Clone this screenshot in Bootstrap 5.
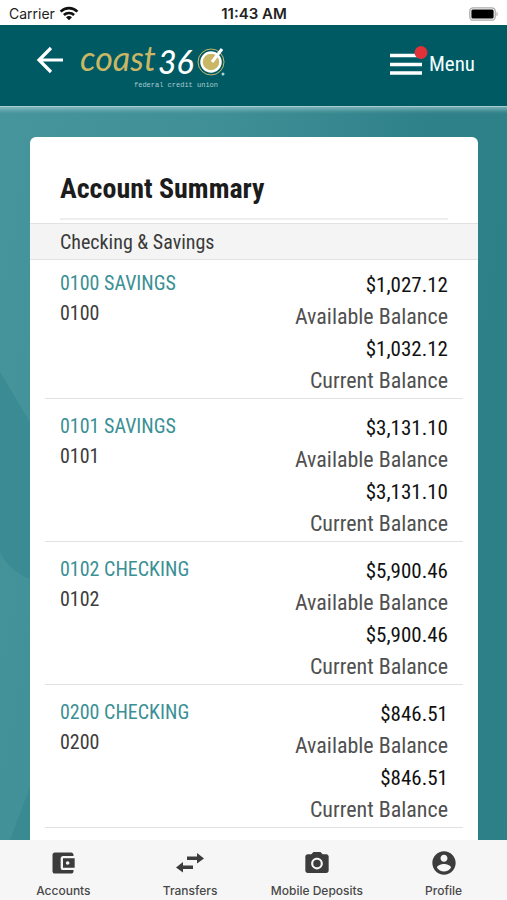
<!DOCTYPE html>
<html lang="en">
<head>
<meta charset="utf-8">
<meta name="viewport" content="width=device-width, initial-scale=1">
<title>Account Summary</title>
<link href="https://cdn.jsdelivr.net/npm/bootstrap@5.3.0/dist/css/bootstrap.min.css" rel="stylesheet">
<style>
  body { font-family: "Roboto Condensed", "Liberation Sans Narrow", Roboto, sans-serif; color: #3c3c3c; background: #fff; }
  .status-bar { height: 25px; padding: 2px 8px 0 9px; font: 14px/24px Inter, sans-serif; color: #222; }
  .status-bar .clock { font-size: 15px; font-weight: 600; }
  .status-side { flex: 1 1 0; }
  .app-header { height: 81px; padding: 0 32px 4px 36px; background: #005a64; color: #fff; }
  .menu-btn { font-size: 21px; line-height: 28px; color: #f2ffff; }
  .page-main { background: linear-gradient(100deg, #47959c 0%, #3f8f97 35%, #2f8189 68%, #2e8088 100%); padding: 30px 29px 0 30px; border-top: 1px solid #a9cdd1; box-shadow: inset 0 7px 4px -4px rgba(190, 225, 228, .5); }
  .backdrop { inset: 0; }
  .summary-card { border-radius: 6px 6px 0 0; }
  .summary-title { margin: 0 30px; padding: 34px 0 11px; font-size: 28px; line-height: 36px; font-weight: 700; color: #1c1c1c; border-bottom: 2px solid #eee; }
  .group-title { margin: 3px 0 0; padding: 0 30px; height: 37px; font-size: 20px; font-weight: 400; line-height: 36px; background: #f4f4f4; border-top: 1px solid #e2e2e2; border-bottom: 1px solid #e2e2e2; color: #3a3a3a; }
  .account-row { margin: 0 15px; padding: 13px 15px 1px; border-bottom: 1px solid #e2e2e2; font-size: 22px; line-height: 32px; }
  .account-row:first-child { padding-top: 9px; }
  .account-name { font-size: 20px; line-height: 28px; color: #3a9095; }
  .account-no { font-size: 20px; line-height: 32px; }
  .amount { color: #111; font-size: 21px; }
  .amount-label { color: #505050; }
  .tab-bar { height: 60px; background: #f6f6f6; }
  .tab-link { padding-top: 9px; font: 500 12px/16px Inter, sans-serif; color: #484848; gap: 6px; }
</style>
</head>
<body class="d-flex flex-column vh-100 overflow-hidden">
  <div class="status-bar d-flex align-items-center flex-shrink-0">
    <div class="status-side d-flex align-items-center gap-1">
      <span>Carrier</span>
      <svg width="20" height="15" viewBox="0 0 20 15" fill="none" stroke="#111" stroke-width="2.6" aria-hidden="true"><path d="M1.6 5.600C6.400.9 13.600.9 18.400 5.600M4.900 9C7.700 6.300 12.300 6.300 15.100 9"/><path d="M7 11.200Q10 8.700 13 11.200L10 14.200Z" fill="#111" stroke="none"/></svg>
    </div>
    <span class="clock">11:43 AM</span>
    <div class="status-side d-flex justify-content-end">
      <svg width="30" height="14" viewBox="0 0 30 14" aria-hidden="true"><rect x=".8" y=".8" width="25.400" height="12.400" rx="3.500" fill="#fff" stroke="#aaa" stroke-width="1.300"/><rect x="2.400" y="2.400" width="22.200" height="9.200" rx="1.500"/><path d="M27.500 4.500Q30 7 27.500 9.500Z" fill="#aaa"/></svg>
    </div>
  </div>

  <header class="app-header d-flex align-items-center flex-shrink-0">
    <button type="button" class="btn p-0 border-0 d-flex mb-2" aria-label="Back">
      <svg width="28" height="28" viewBox="0 0 28 28" fill="none" stroke="#fff" stroke-width="3.200"><path d="M15 2 3 14 15 26M3 14H27"/></svg>
    </button>
    <a href="#" class="d-flex ms-3" aria-label="Coast360 federal credit union">
      <svg width="150" height="56" viewBox="0 -4 150 56">
        <g font-family="Lato, sans-serif" font-style="italic">
          <text x="0" y="31" font-size="34" fill="#c9b765">coast</text>
          <text x="78" y="34" font-size="32" font-weight="500" fill="#fff">36</text>
        </g>
        <circle cx="131" cy="22" r="13" fill="none" stroke="#c9b765" stroke-width="1"/>
        <circle cx="131" cy="22" r="9.500" fill="#c9b765" stroke="#fff" stroke-width="2.500"/>
        <path d="M132 22 142 9" stroke="#fff" stroke-width="3"/>
        <circle cx="143" cy="34" r="1.500" fill="#b9d0d0"/>
        <text x="54" y="47" font-family="Liberation Mono, monospace" font-size="7" fill="#a9cdd1">federal credit union</text>
      </svg>
    </a>
    <button type="button" class="menu-btn btn p-0 border-0 ms-auto d-flex align-items-center">
      <svg width="40" height="36" viewBox="0 0 40 36" aria-hidden="true"><path d="M1 9.500H33M1 18.500H33M1 27H33" stroke="#fff" stroke-width="3.500"/><circle cx="32" cy="6.500" r="6.500" fill="#e03238"/></svg>
      Menu
    </button>
  </header>

  <main class="page-main position-relative d-flex flex-column flex-grow-1 overflow-hidden">
    <svg class="backdrop position-absolute w-100 h-100" viewBox="0 0 507 733" preserveAspectRatio="none" aria-hidden="true"><path d="M0 265 34 322V474Q8 464 0 445Z" fill="#3a8b93"/><path d="M30 680 10 733H34Z" fill="#398a91"/></svg>
    <section class="summary-card bg-white position-relative flex-grow-1">
      <h1 class="summary-title">Account Summary</h1>
      <h2 class="group-title">Checking &amp; Savings</h2>
      <ul class="list-unstyled mb-0">
        <li class="account-row d-flex justify-content-between">
          <div><a href="#" class="account-name d-block text-decoration-none">0100 SAVINGS</a><div class="account-no">0100</div></div>
          <div class="text-end"><div class="amount">$1,027.12</div><div class="amount-label">Available Balance</div><div class="amount">$1,032.12</div><div class="amount-label">Current Balance</div></div>
        </li>
        <li class="account-row d-flex justify-content-between">
          <div><a href="#" class="account-name d-block text-decoration-none">0101 SAVINGS</a><div class="account-no">0101</div></div>
          <div class="text-end"><div class="amount">$3,131.10</div><div class="amount-label">Available Balance</div><div class="amount">$3,131.10</div><div class="amount-label">Current Balance</div></div>
        </li>
        <li class="account-row d-flex justify-content-between">
          <div><a href="#" class="account-name d-block text-decoration-none">0102 CHECKING</a><div class="account-no">0102</div></div>
          <div class="text-end"><div class="amount">$5,900.46</div><div class="amount-label">Available Balance</div><div class="amount">$5,900.46</div><div class="amount-label">Current Balance</div></div>
        </li>
        <li class="account-row d-flex justify-content-between">
          <div><a href="#" class="account-name d-block text-decoration-none">0200 CHECKING</a><div class="account-no">0200</div></div>
          <div class="text-end"><div class="amount">$846.51</div><div class="amount-label">Available Balance</div><div class="amount">$846.51</div><div class="amount-label">Current Balance</div></div>
        </li>
      </ul>
    </section>
  </main>

  <nav class="tab-bar d-flex flex-shrink-0" aria-label="Main">
    <a href="#" class="tab-link col-3 d-flex flex-column align-items-center text-decoration-none">
      <svg width="28" height="28" viewBox="0 0 24 24" fill="#3c3c3c" aria-hidden="true"><path d="M21 18v1c0 1.100-.9 2-2 2H5c-1.110 0-2-.9-2-2V5c0-1.100.89-2 2-2h14c1.100 0 2 .9 2 2v1h-9c-1.110 0-2 .9-2 2v8c0 1.100.89 2 2 2h9zm-9-2h10V8H12v8zm4-2.500c-.83 0-1.500-.67-1.500-1.500s.67-1.500 1.500-1.500 1.500.67 1.500 1.500-.67 1.500-1.500 1.500z"/></svg>
      Accounts
    </a>
    <a href="#" class="tab-link col-3 d-flex flex-column align-items-center text-decoration-none">
      <svg width="28" height="28" viewBox="0 0 28 28" fill="#3c3c3c" aria-hidden="true"><path d="M11 7.500H21V4L28 9.500 21 14.500V11H11ZM17 16.500H7V13L0 18.500 7 23.500V20H17Z"/></svg>
      Transfers
    </a>
    <a href="#" class="tab-link col-3 d-flex flex-column align-items-center text-decoration-none">
      <svg width="28" height="28" viewBox="0 0 24 24" fill="#3c3c3c" aria-hidden="true"><circle cx="12" cy="12.500" r="3.200"/><path d="M9 2.500 7.170 4.500H4c-1.100 0-2 .9-2 2v12c0 1.100.9 2 2 2h16c1.100 0 2-.9 2-2v-12c0-1.100-.9-2-2-2h-3.170L15 2.500H9zm3 15c-2.760 0-5-2.240-5-5s2.240-5 5-5 5 2.240 5 5-2.240 5-5 5z"/></svg>
      Mobile Deposits
    </a>
    <a href="#" class="tab-link col-3 d-flex flex-column align-items-center text-decoration-none">
      <svg width="28" height="28" viewBox="0 0 24 24" fill="#3c3c3c" aria-hidden="true"><path d="M12 2C6.480 2 2 6.480 2 12s4.480 10 10 10 10-4.480 10-10S17.520 2 12 2zm0 3c1.660 0 3 1.340 3 3s-1.340 3-3 3-3-1.340-3-3 1.340-3 3-3zm0 14.200c-2.500 0-4.710-1.280-6-3.220.03-1.990 4-3.080 6-3.080 1.990 0 5.970 1.090 6 3.080-1.290 1.940-3.500 3.220-6 3.220z"/></svg>
      Profile
    </a>
  </nav>
<script src="https://cdn.jsdelivr.net/npm/bootstrap@5.3.0/dist/js/bootstrap.bundle.min.js"></script>
</body>
</html>
